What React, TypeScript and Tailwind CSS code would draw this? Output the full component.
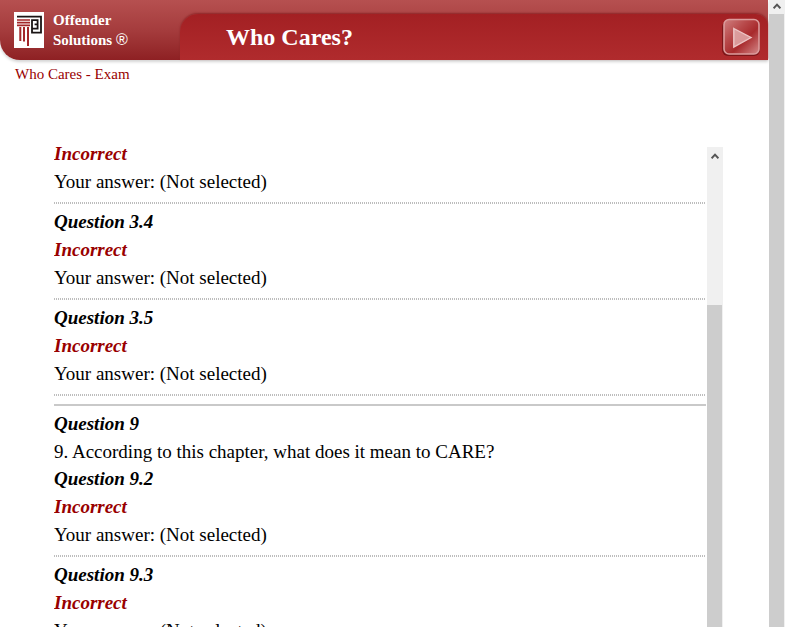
import type { ReactNode } from 'react';

interface Result {
  id: string;
  prompt?: string;
  parts: string[];
}

const QUESTION_9: Result = {
  id: '9',
  prompt: '9. According to this chapter, what does it mean to CARE?',
  parts: ['9.2', '9.3'],
};

function Logo() {
  return (
    <svg width="30" height="36" viewBox="0 0 30 36" aria-hidden="true" className="shrink-0">
      <rect width="30" height="36" fill="#fff" />
      <path d="M3 4.6H27V20.6H18V8.2H23.6V12.4H20.6M18 16.6H23.6V13" fill="none" stroke="#1a1414" strokeWidth="1.8" />
      <path d="M3 8H16M3 10.7H16M3 13.4H16" stroke="#a3262a" strokeWidth="1.7" />
      <path d="M6.3 15V29M10 15V29.5M14 15V34" stroke="#a3262a" strokeWidth="2" />
    </svg>
  );
}

function NextButton() {
  return (
    <button type="button" aria-label="Next" className="block h-10 w-10 shrink-0">
      <svg width="40" height="40" viewBox="0 0 40 40" aria-hidden="true">
        <defs>
          <linearGradient id="face" x1="0" y1="0" x2="1" y2="1">
            <stop offset="0" stopColor="#d08080" />
            <stop offset="0.35" stopColor="#b84a4b" />
            <stop offset="0.6" stopColor="#a82a2c" />
            <stop offset="1" stopColor="#d58a8a" />
          </linearGradient>
          <linearGradient id="arrow" x1="0" y1="0" x2="1" y2="1">
            <stop offset="0" stopColor="#dba0a0" />
            <stop offset="1" stopColor="#d99292" />
          </linearGradient>
        </defs>
        <rect x="1" y="4" width="38" height="35" rx="6" fill="#7d1518" />
        <rect x="3" y="2.5" width="35" height="34.5" rx="5" fill="url(#face)" stroke="#dc9c9c" strokeWidth="1.6" />
        <path d="M12.8 11.5L30 20.5L12.8 30Z" fill="url(#arrow)" stroke="#edc6c6" strokeWidth="1.4" />
      </svg>
    </button>
  );
}

function UpArrow() {
  return (
    <svg width="8" height="6" viewBox="0 0 8 6" aria-hidden="true">
      <path d="M0.6 5.2L4 1.6L7.4 5.2" fill="none" stroke="#555" strokeWidth="2" />
    </svg>
  );
}

function Dotted() {
  return (
    <div className="mt-[6px] mb-1 h-[2px] bg-[repeating-linear-gradient(90deg,#bdbdbd_0_1px,#fff_1px_2px)]" />
  );
}

function Heading({ children }: { children: ReactNode }) {
  return <h2 className="font-bold italic">{children}</h2>;
}

function Part({ id }: { id?: string }) {
  return (
    <section>
      {id && <Heading>Question {id}</Heading>}
      <p className="font-bold text-[#990000] italic">Incorrect</p>
      <p>Your answer: (Not selected)</p>
      <Dotted />
    </section>
  );
}

export default function App() {
  return (
    <div className="flex h-screen overflow-hidden bg-white font-['Liberation_Serif','Times_New_Roman',serif] text-black">
      <div className="flex min-w-0 flex-1 flex-col">
        <header className="flex h-[60px] shrink-0 rounded-bl-[20px] bg-linear-to-b from-[#b65050] via-[#a53c3d] to-[#8e2023] shadow-[0_2px_3px_#d4d4d4]">
          <a href="#home" className="flex w-[180px] shrink-0 items-center gap-[9px] pl-[14px] text-white">
            <Logo />
            <span className="text-[15px] leading-5 font-bold">
              Offender
              <br />
              Solutions <span className="font-['Liberation_Sans',sans-serif] text-base leading-5 font-normal">®</span>
            </span>
          </a>
          <div className="mt-[14px] flex min-w-0 flex-1 items-center justify-between rounded-tl-[18px] rounded-tr-[12px] bg-linear-to-b from-[#a32023] to-[#b02b2d] pr-[7px] pl-[46px] shadow-[0_-1px_2px_#8e2628]">
            <h1 className="text-2xl font-bold text-white">Who Cares?</h1>
            <NextButton />
          </div>
        </header>

        <nav className="mt-1 px-[15px] text-[15px] leading-5">
          <a href="#exam" className="text-[#990000]">
            Who Cares - Exam
          </a>
        </nav>

        <main className="mt-14 mr-[45px] ml-[54px] flex min-h-0 flex-1 gap-px">
          <div className="min-w-0 flex-1 overflow-hidden text-[19px] leading-7">
            <Part />
            <Part id="3.4" />
            <Part id="3.5" />
            <hr className="mt-2 mb-1 border-t-2 border-[#c9c9c9]" />
            <Heading>Question {QUESTION_9.id}</Heading>
            <p className="leading-[27px]">{QUESTION_9.prompt}</p>
            {QUESTION_9.parts.map((id) => (
              <Part key={id} id={id} />
            ))}
          </div>
          <div className="mt-[7px] flex w-4 flex-col items-center bg-[#f0f0f0] pt-[6px]">
            <UpArrow />
            <div className="mt-[146px] w-full flex-1 border-r border-[#f0f0f0] bg-[#cdcdcd]" />
          </div>
        </main>
      </div>

      <div className="ml-px flex w-4 shrink-0 flex-col items-center bg-[#f0f0f0] pt-[3px]">
        <UpArrow />
        <div className="mt-[5px] w-full flex-1 border-r border-[#f0f0f0] bg-[#cdcdcd]" />
      </div>
    </div>
  );
}
